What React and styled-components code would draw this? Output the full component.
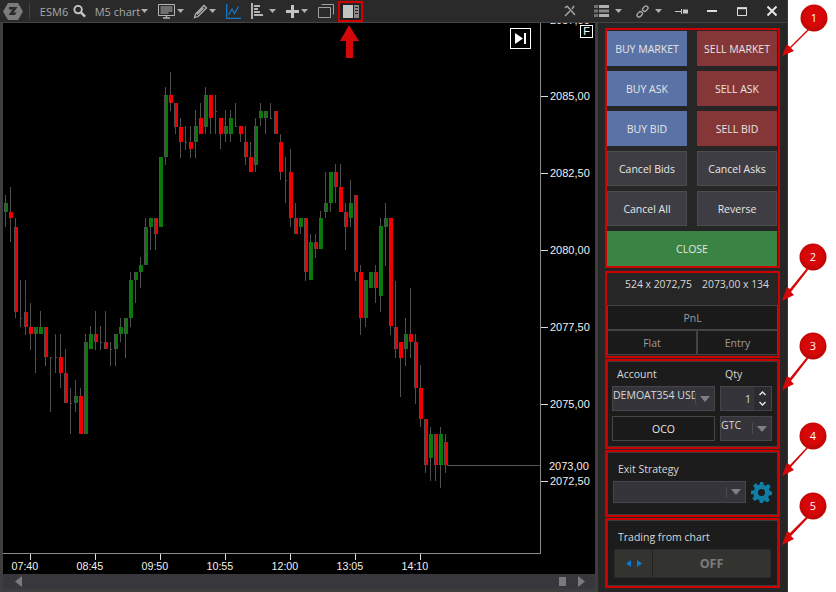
import React from 'react';
import styled, { createGlobalStyle } from 'styled-components';

const GlobalStyle = createGlobalStyle`
  html, body { margin: 0; padding: 0; background: #fff; }
  * { box-sizing: border-box; }
  body { font-family: "Open Sans", "Noto Sans", sans-serif; }
`;

// r = red, g = green, d = doji. [type, bodyTop, bodyBottom, wickTop, wickBottom], in page pixels
const candles = [
  ['g', 203, 212, 195, 227], ['r', 212, 218, 187, 242], ['r', 227, 312, 218, 318], ['d', 318, 318, 280, 327],
  ['r', 312, 327, 280, 335], ['r', 327, 334, 303, 350], ['g', 327, 334, 327, 373], ['g', 327, 334, 311, 334],
  ['r', 327, 357, 327, 366], ['d', 357, 357, 357, 412], ['d', 357, 357, 334, 373], ['r', 357, 373, 334, 388],
  ['r', 373, 403, 349, 403], ['d', 403, 403, 388, 434], ['g', 396, 403, 380, 412], ['r', 396, 434, 388, 434],
  ['g', 342, 434, 334, 434], ['g', 334, 349, 326, 349], ['r', 334, 342, 311, 350], ['d', 342, 342, 326, 350],
  ['r', 342, 349, 311, 349], ['d', 349, 349, 342, 366], ['g', 334, 349, 334, 366], ['g', 327, 334, 318, 342],
  ['g', 318, 334, 318, 358], ['g', 280, 318, 272, 327], ['g', 272, 280, 272, 303], ['g', 265, 272, 257, 288],
  ['g', 227, 265, 218, 265], ['g', 218, 227, 218, 250], ['r', 218, 234, 218, 250], ['g', 157, 227, 157, 227],
  ['g', 95, 157, 87, 165], ['r', 95, 103, 72, 111], ['r', 103, 127, 103, 134], ['r', 127, 142, 118, 158],
  ['d', 142, 142, 126, 150], ['r', 142, 149, 126, 158], ['g', 126, 142, 110, 158], ['r', 118, 134, 103, 134],
  ['g', 95, 127, 87, 134], ['r', 95, 118, 95, 134], ['d', 111, 111, 95, 134], ['r', 118, 134, 118, 149],
  ['g', 126, 134, 110, 142], ['g', 118, 134, 110, 142], ['d', 126, 126, 103, 126], ['r', 126, 134, 126, 142],
  ['r', 142, 157, 126, 165], ['r', 157, 172, 142, 172], ['g', 126, 165, 118, 172], ['g', 111, 118, 103, 126],
  ['g', 111, 118, 111, 134], ['d', 118, 118, 103, 118], ['r', 111, 134, 111, 134], ['r', 142, 172, 134, 180],
  ['d', 180, 180, 157, 203], ['r', 172, 218, 149, 227], ['r', 218, 234, 203, 234], ['g', 218, 227, 218, 234],
  ['r', 218, 272, 218, 281], ['g', 242, 280, 234, 280], ['r', 242, 249, 234, 258], ['g', 218, 249, 211, 249],
  ['g', 203, 212, 172, 218], ['g', 172, 203, 172, 212], ['r', 172, 187, 164, 203], ['r', 187, 212, 164, 212],
  ['r', 212, 227, 203, 250], ['g', 203, 218, 180, 227], ['r', 195, 272, 195, 281], ['r', 272, 318, 265, 335],
  ['g', 280, 318, 280, 327], ['g', 272, 288, 272, 288], ['r', 272, 288, 265, 303], ['g', 226, 296, 218, 312],
  ['g', 218, 227, 203, 266], ['r', 218, 326, 218, 335], ['r', 327, 349, 281, 358], ['r', 342, 358, 342, 397],
  ['g', 334, 349, 318, 366], ['r', 334, 342, 288, 358], ['r', 342, 388, 334, 404], ['r', 388, 419, 365, 427],
  ['r', 419, 465, 419, 473], ['g', 434, 458, 427, 481], ['r', 434, 465, 434, 481], ['g', 434, 465, 427, 488],
  ['r', 442, 465, 434, 473],
];

const prices = [
  ['2087,50', 20], ['2085,00', 96], ['2082,50', 173], ['2080,00', 250],
  ['2077,50', 327], ['2075,00', 404], ['2072,50', 481],
];
const times = ['07:40', '08:45', '09:50', '10:55', '12:00', '13:05', '14:10'];

const Page = styled.div`
  position: relative;
  width: 836px;
  height: 592px;
  overflow: hidden;
`;
const Win = styled.div`
  width: 788px;
  height: 592px;
  background: #262626;
  display: flex;
  flex-direction: column;
  border-right: 1px solid #3a3a3a;
`;
const Toolbar = styled.div`
  height: 23px;
  flex: none;
  display: flex;
  align-items: center;
  background: #2a2a2a;
  border-bottom: 1px solid #444;
  color: #a8a8a8;
  font-size: 11px;
`;
const Tool = styled.div`
  flex: none;
  margin-left: ${p => p.$ml || 0}px;
  width: ${p => p.$w}px;
  height: 20px;
  display: flex;
  align-items: center;
  justify-content: center;
  white-space: nowrap;
`;
const ActiveTool = styled(Tool)`
  height: 21px;
  border: 2px solid #d40000;
  background: #222;
`;
const ToolSep = styled.div`
  flex: none;
  width: 1px;
  height: 16px;
  margin-left: 6px;
  background: #444;
`;
const Spacer = styled.div`
  flex: 1;
`;
const Body = styled.div`
  flex: 1;
  display: flex;
  min-height: 0;
`;
const ChartColumn = styled.div`
  width: 598px;
  flex: none;
  display: flex;
  flex-direction: column;
  background: #3e3e3e;
  padding: 0 3px 3px;
`;
const ChartArea = styled.div`
  position: relative;
  height: 551px;
  background: #000;
  overflow: hidden;
`;
const ChartSvg = styled.svg`
  display: block;
  font-family: "Liberation Sans", Arial, sans-serif;
  font-size: 11px;
`;
const GoEnd = styled.div`
  position: absolute;
  left: 507px;
  top: 5px;
  width: 21px;
  height: 21px;
  border: 1px solid #fff;
  display: flex;
  align-items: center;
  justify-content: center;
`;
const FBadge = styled.div`
  position: absolute;
  left: 577px;
  top: 2px;
  width: 13px;
  height: 13px;
  border: 1px solid #fff;
  color: #fff;
  font: 11px/11px "Liberation Sans", sans-serif;
  text-align: center;
`;
const ScrollBar = styled.div`
  height: 15px;
  flex: none;
  background: #38383c;
  display: flex;
  align-items: center;
  padding: 0 10px 0 12px;
`;
const ScrollThumb = styled.div`
  width: 7px;
  height: 9px;
  background: #7a7a7a;
  margin-left: auto;
  margin-right: 12px;
`;
const Panel = styled.div`
  flex: 1;
  display: flex;
  flex-direction: column;
  gap: 1px;
  padding: 5px 0 0 7px;
  background: #262626;
`;
const Section = styled.section`
  width: 175px;
  height: ${p => p.$h}px;
  flex: none;
  margin-bottom: ${p => p.$mb || 0}px;
  border: 2px solid #d00000;
  display: flex;
  flex-direction: column;
`;
const ButtonGrid = styled.div`
  display: grid;
  grid-template-columns: 80px 80px;
  grid-auto-rows: 35px;
  gap: 5px 10px;
  padding-top: 1px;
`;
const colors = { buy: '#5a73a6', sell: '#853636', neutral: '#3d3d43', close: '#3a8443' };
const OrderButton = styled.div`
  grid-column: ${p => (p.$wide ? '1 / 3' : 'auto')};
  width: ${p => (p.$wide ? '170px' : 'auto')};
  background: ${p => colors[p.$kind]};
  border: ${p => (p.$kind === 'neutral' ? '1px solid #4c4c4c' : 'none')};
  color: #e6e6e6;
  font-size: 10.5px;
  display: flex;
  align-items: center;
  justify-content: center;
`;
const Quotes = styled.div`
  height: 32px;
  display: flex;
  padding: 3px 0 0 18px;
  gap: 10px;
  color: #d8d8d8;
  font-size: 10.4px;
  line-height: 17px;
  white-space: nowrap;
`;
const PnlGrid = styled.div`
  display: grid;
  width: 171px;
  grid-template-columns: 90px 81px;
  grid-template-rows: 25px 25px;
`;
const PnlCell = styled.div`
  grid-column: ${p => (p.$wide ? '1 / 3' : 'auto')};
  background: #1a1a1a;
  border: 1px solid #444;
  color: #9c9c9c;
  font-size: 10.5px;
  display: flex;
  align-items: center;
  justify-content: center;
`;
const Inner = styled.div`
  flex: 1;
  background: #1c1c1c;
  border: 1px solid #3c3c3c;
  padding: ${p => p.$pad};
  color: #d8d8d8;
  font-size: 10.5px;
`;
const AccountGrid = styled.div`
  display: grid;
  grid-template-columns: 103px 52px;
  grid-template-rows: 15px 25px 25px;
  gap: 5px;
`;
const Label = styled.div`
  padding-left: ${p => p.$pl || 0}px;
  line-height: 16px;
  white-space: nowrap;
`;
const Select = styled.div`
  position: relative;
  height: ${p => p.$h || 25}px;
  width: ${p => p.$w || 'auto'};
  background: #34343a;
  border: 1px solid #46464a;
  color: #d8d8d8;
  display: flex;
  align-items: ${p => (p.$top ? 'flex-start' : 'center')};
  overflow: hidden;
  line-height: 16px;
`;
const SelectText = styled.div`
  flex: 1;
  overflow: hidden;
  white-space: nowrap;
`;
const SelectArrow = styled.div`
  flex: none;
  width: ${p => p.$w}px;
  height: 11px;
  align-self: center;
  border-left: 1px solid #4c4c50;
  display: flex;
  align-items: center;
  justify-content: center;
  &::after {
    content: '';
    border-left: 5px solid transparent;
    border-right: 5px solid transparent;
    border-top: 6px solid #808084;
  }
`;
const QtyInput = styled.div`
  display: flex;
  align-items: center;
  justify-content: flex-end;
  background: #34343a;
  border: 1px solid #46464a;
  color: #d8d8d8;
`;
const Spin = styled.div`
  width: 17px;
  height: 100%;
  margin-left: 3px;
  background: #2c2c30;
  display: flex;
  align-items: center;
  justify-content: center;
`;
const OcoButton = styled.div`
  background: #1a1a1a;
  border: 1px solid #46464a;
  color: #e6e6e6;
  display: flex;
  align-items: center;
  justify-content: center;
`;
const StrategyRow = styled.div`
  display: flex;
  align-items: center;
  gap: 5px;
  margin-top: 4px;
`;
const Toggle = styled.div`
  display: flex;
  height: 29px;
  margin-top: 4px;
  background: #333330;
  border: 1px solid #2a2a2a;
`;
const ToggleSide = styled.div`
  width: 38px;
  border-right: 1px solid #222;
  display: flex;
  align-items: center;
  justify-content: center;
`;
const ToggleMain = styled.div`
  flex: 1;
  display: flex;
  align-items: center;
  justify-content: center;
  color: #7c7c7c;
  font-size: 12.5px;
  font-weight: 700;
`;
const Overlay = styled.svg`
  position: absolute;
  left: 0;
  top: 0;
  pointer-events: none;
  font-family: "Open Sans", sans-serif;
`;

const Caret = () => (
  <svg width="7" height="4" viewBox="0 0 7 4"><path d="M0 0h7L3.500 4z" fill="#b0b0b0" /></svg>
);

const Logo = () => (
  <svg width="20" height="19" viewBox="0 0 20 19">
    <path d="M5 1h10l5 8.500-5 8.500H5L0 9.500z" fill="#7c7c7c" />
    <path d="M6 5h8.500l-4 5.500h3L12 13H5.500l4-5.500H6z" fill="#2a2a2a" />
  </svg>
);
const Search = () => (
  <svg width="14" height="14" viewBox="0 0 14 14" fill="none" stroke="#c8c8c8">
    <circle cx="5.500" cy="5.500" r="4" strokeWidth="2" />
    <path d="M8.500 8.500l4.500 4.500" strokeWidth="2.600" />
  </svg>
);
const Monitor = () => (
  <svg width="17" height="15" viewBox="0 0 17 15">
    <path d="M.5.5h16v11H.5z" fill="none" stroke="#b4b4b4" />
    <path d="M2.500 3h12M2.500 5h12M2.500 7h12M2.500 9h8" stroke="#b4b4b4" />
    <path d="M5 14h7M8.500 12v2" stroke="#b4b4b4" strokeWidth="1.400" />
  </svg>
);
const Pencil = () => (
  <svg width="15" height="15" viewBox="0 0 15 15" fill="none" stroke="#b4b4b4">
    <path d="M11 1.500l2.500 2.500-8.500 8.500-3.500 1 1-3.500z" strokeWidth="1.300" />
    <path d="M4 10.500l6.500-6.500" strokeWidth="1.500" />
  </svg>
);
const LineChartIcon = () => (
  <svg width="15" height="15" viewBox="0 0 15 15" fill="none" stroke="#1678c8" strokeWidth="1.300">
    <path d="M.7 0v14.300H15" />
    <path d="M2.500 11L6 5l2.500 4.500L12.500 2.500" />
  </svg>
);
const AlignIcon = () => (
  <svg width="13" height="16" viewBox="0 0 13 16" fill="#b4b4b4">
    <path d="M0 0h2v16H0zM3 2h6v2H3zM3 5h4v2H3zM3 8h6v2H3zM3 11h9v2H3z" />
  </svg>
);
const Plus = () => (
  <svg width="13" height="13" viewBox="0 0 13 13" fill="#c4c4c4"><path d="M5 0h3v5h5v3H8v5H5V8H0V5h5z" /></svg>
);
const Windows = () => (
  <svg width="16" height="14" viewBox="0 0 16 14" fill="none" stroke="#a0a0a0">
    <path d="M3.500.5h12v10" />
    <path d="M.5 3.500h12v10H.5z" />
  </svg>
);
const PanelIcon = () => (
  <svg width="16" height="13" viewBox="0 0 16 13">
    <path d="M0 0h10v13H0z" fill="#c4c4c4" />
    <path d="M11 0h5v13h-5z" fill="#8a8a8a" />
    <path d="M12 2.500h3M12 5.500h3M12 8.500h3" stroke="#222" />
  </svg>
);
const Wrench = () => (
  <svg width="13" height="12" viewBox="0 0 13 12" fill="none" stroke="#a0a0a0" strokeWidth="1.600">
    <path d="M1 11l5-5M3 1l8 9M10 1L8 4" />
    <path d="M1 3l2-2" />
  </svg>
);
const ListIcon = () => (
  <svg width="15" height="12" viewBox="0 0 15 12">
    <path d="M0 0h4v3H0zM0 4.500h4v3H0zM0 9h4v3H0z" fill="#707070" />
    <path d="M5 0h10v3H5zM5 9h10v3H5z" fill="#b0b0b0" />
    <path d="M5 4.500h10v3H5z" fill="#888" />
  </svg>
);
const LinkIcon = () => (
  <svg width="13" height="13" viewBox="0 0 13 13" fill="none" stroke="#a8a8a8" strokeWidth="1.300">
    <rect x="-3" y="-2" width="6" height="4" rx="2" transform="translate(3.700 9.300) rotate(-45)" />
    <rect x="-3" y="-2" width="6" height="4" rx="2" transform="translate(9.300 3.700) rotate(-45)" />
  </svg>
);
const Pin = () => (
  <svg width="13" height="7" viewBox="0 0 13 7" fill="#c8c8c8">
    <path d="M0 3h6v1H0zM6 1h1v5H6zM8 1.500h5v4H8z" />
  </svg>
);
const Minimize = () => (
  <svg width="10" height="2" viewBox="0 0 10 2"><path d="M0 0h10v2H0z" fill="#ddd" /></svg>
);
const Maximize = () => (
  <svg width="10" height="9" viewBox="0 0 10 9" fill="none" stroke="#ddd">
    <path d="M.5 1h9v7.500h-9z" strokeWidth="1" />
    <path d="M0 1.200h10" strokeWidth="2" />
  </svg>
);
const Close = () => (
  <svg width="10" height="10" viewBox="0 0 10 10" stroke="#e6e6e6" strokeWidth="2"><path d="M.5.500l9 9M9.500.500l-9 9" /></svg>
);
const Gear = () => (
  <svg width="21" height="21" viewBox="0 0 24 24" fill="#0f7da6">
    <path fillRule="evenodd" d="M10 0h4l.6 3.400 2.200.9L19.700 2.400l2.800 2.800-2 2.900.9 2.200L24 10.900v3.900l-3.500.6-.9 2.200 2 2.900-2.800 2.800-2.900-2-2.200.9L13.900 24H10l-.6-3.500-2.200-.9-2.900 2-2.800-2.800 2-2.900-.9-2.200L0 13.900V10l3.500-.6.900-2.200-2-2.900 2.800-2.800 2.900 2 2.200-.9zM12 8a4 4 0 1 0 0 8 4 4 0 0 0 0-8z" />
  </svg>
);

const Chart = () => (
  <ChartSvg width="592" height="551" viewBox="3 23 592 551" shapeRendering="crispEdges">
    {candles.map(([type, top, bottom, wickTop, wickBottom], i) => {
      const x = 5 + i * 5;
      return (
        <g key={i}>
          <rect x={x} y={wickTop} width="1" height={wickBottom - wickTop} fill="#505050" />
          {type === 'd' ? (
            <rect x={x} y={top} width="2" height="1" fill="#505050" />
          ) : (
            <>
              <rect x={x - 1} y={top} width="4" height={bottom - top} fill="#505050" />
              <rect x={x} y={top} width="3" height={bottom - top} fill={type === 'r' ? '#f00000' : '#0a780a'} />
            </>
          )}
        </g>
      );
    })}
    <rect x="447" y="465" width="93" height="1" fill="#555" />
    <rect x="540" y="23" width="1" height="531" fill="#8a8a8a" />
    <rect x="3" y="553" width="538" height="1" fill="#8a8a8a" />
    {prices.map(([label, y]) => (
      <g key={label}>
        <rect x="541" y={y} width="7" height="1" fill="#ddd" />
        <text x="550" y={y + 4} fill="#f0f0f0">{label}</text>
      </g>
    ))}
    <text x="549" y="470" fill="#f0f0f0">2073,00</text>
    {times.map((label, i) => (
      <g key={label}>
        <rect x={30 + i * 65} y="554" width="1" height="6" fill="#ddd" />
        <text x={11.5 + i * 65} y="570" fill="#f0f0f0" fontSize="10.700">{label}</text>
      </g>
    ))}
  </ChartSvg>
);

const ScrollArrow = ({ left }) => (
  <svg width="7" height="11" viewBox="0 0 7 11">
    <path d={left ? 'M7 0v11L0 5.500z' : 'M0 0v11l7-5.500z'} fill="#7a7a7a" />
  </svg>
);

const Notes = () => {
  const notes = [
    ['1', 814, 18, 'M809 28L790 47l-3-3-5 12 12-5-3-3 19-19z'],
    ['2', 813, 257, 'M807 268L790 289l-3-2-5 14 12-6-3-3 17-22z'],
    ['3', 813, 346, 'M807 357L790 378l-3-2-5 14 12-6-3-3 17-22z'],
    ['4', 813, 436, 'M807 447L790 465l-3-2-5 13 12-6-3-3 17-19z'],
    ['5', 813, 506, 'M807 516L790 533l-3-2-5 14 12-6-3-3 17-18z'],
  ];
  return (
    <Overlay width="836" height="592" viewBox="0 0 836 592">
      <defs>
        <radialGradient id="noteFill" cx="0.5" cy="0.45" r="0.55">
          <stop offset="0.6" stopColor="#d80808" />
          <stop offset="1" stopColor="#b80404" />
        </radialGradient>
      </defs>
      <path d="M349 25l10 16h-6v17h-7V41h-6z" fill="#d40808" />
      {notes.map(([n, cx, cy, d]) => (
        <g key={n}>
          <path d={d} fill="#d40808" />
          <circle cx={cx} cy={cy} r="13.500" fill="url(#noteFill)" />
          <text x={cx} y={cy + 4} textAnchor="middle" fill="#fff" fontSize="11">{n}</text>
        </g>
      ))}
    </Overlay>
  );
};

export default function App() {
  return (
    <Page>
      <GlobalStyle />
      <Win>
        <Toolbar>
          <Tool $ml={3} $w={20}><Logo /></Tool>
          <ToolSep />
          <Tool $ml={11} $w={26}>ESM6</Tool>
          <Tool $ml={6} $w={13}><Search /></Tool>
          <Tool $ml={10} $w={43}>M5 chart</Tool>
          <Tool $ml={2} $w={7}><Caret /></Tool>
          <Tool $ml={10} $w={17}><Monitor /></Tool>
          <Tool $ml={2} $w={7}><Caret /></Tool>
          <Tool $ml={9} $w={15}><Pencil /></Tool>
          <Tool $ml={1} $w={7}><Caret /></Tool>
          <Tool $ml={10} $w={15}><LineChartIcon /></Tool>
          <Tool $ml={10} $w={13}><AlignIcon /></Tool>
          <Tool $ml={5} $w={7}><Caret /></Tool>
          <Tool $ml={10} $w={13}><Plus /></Tool>
          <Tool $ml={2} $w={7}><Caret /></Tool>
          <Tool $ml={10} $w={16}><Windows /></Tool>
          <ActiveTool $ml={4} $w={25}><PanelIcon /></ActiveTool>
          <Spacer />
          <Tool $w={13}><Wrench /></Tool>
          <Tool $ml={17} $w={15}><ListIcon /></Tool>
          <Tool $ml={6} $w={7}><Caret /></Tool>
          <Tool $ml={14} $w={13}><LinkIcon /></Tool>
          <Tool $ml={6} $w={7}><Caret /></Tool>
          <Tool $ml={13} $w={13}><Pin /></Tool>
          <Tool $ml={19} $w={10}><Minimize /></Tool>
          <Tool $ml={20} $w={10}><Maximize /></Tool>
          <Tool $ml={20} $w={10}><Close /></Tool>
          <Tool $ml={10} $w={0} />
        </Toolbar>
        <Body>
          <ChartColumn>
            <ChartArea>
              <Chart />
              <GoEnd>
                <svg width="11" height="11" viewBox="0 0 11 11" fill="#fff"><path d="M0 0l8 5.500-8 5.500zM9 0h2v11H9z" /></svg>
              </GoEnd>
              <FBadge>F</FBadge>
            </ChartArea>
            <ScrollBar>
              <ScrollArrow left />
              <ScrollThumb />
              <ScrollArrow />
            </ScrollBar>
          </ChartColumn>
          <Panel>
            <Section $h={240} $mb={2}>
              <ButtonGrid>
                <OrderButton $kind="buy">BUY MARKET</OrderButton>
                <OrderButton $kind="sell">SELL MARKET</OrderButton>
                <OrderButton $kind="buy">BUY ASK</OrderButton>
                <OrderButton $kind="sell">SELL ASK</OrderButton>
                <OrderButton $kind="buy">BUY BID</OrderButton>
                <OrderButton $kind="sell">SELL BID</OrderButton>
                <OrderButton $kind="neutral">Cancel Bids</OrderButton>
                <OrderButton $kind="neutral">Cancel Asks</OrderButton>
                <OrderButton $kind="neutral">Cancel All</OrderButton>
                <OrderButton $kind="neutral">Reverse</OrderButton>
                <OrderButton $kind="close" $wide>CLOSE</OrderButton>
              </ButtonGrid>
            </Section>
            <Section $h={87}>
              <Quotes>
                <span>524 x 2072,75</span>
                <span>2073,00 x 134</span>
              </Quotes>
              <PnlGrid>
                <PnlCell $wide>PnL</PnlCell>
                <PnlCell>Flat</PnlCell>
                <PnlCell>Entry</PnlCell>
              </PnlGrid>
            </Section>
            <Section $h={90}>
              <Inner $pad="4px 4px 0">
                <AccountGrid>
                  <Label $pl={5}>Account</Label>
                  <Label $pl={5}>Qty</Label>
                  <Select $top>
                    <SelectText>DEMOAT354 USD</SelectText>
                    <SelectArrow $w={19} />
                  </Select>
                  <QtyInput>
                    1
                    <Spin>
                      <svg width="9" height="17" viewBox="0 0 9 17" fill="none" stroke="#e8e8e8" strokeWidth="1.400">
                        <path d="M1.500 5l3-3 3 3M1.500 12l3 3 3-3" />
                      </svg>
                    </Spin>
                  </QtyInput>
                  <OcoButton>OCO</OcoButton>
                  <Select $top>
                    <SelectText>GTC</SelectText>
                    <SelectArrow $w={19} />
                  </Select>
                </AccountGrid>
              </Inner>
            </Section>
            <Section $h={67}>
              <Inner $pad="8px 5px 0">
                <Label $pl={5}>Exit Strategy</Label>
                <StrategyRow>
                  <Select $h={22} $w="133px">
                    <SelectText />
                    <SelectArrow $w={19} />
                  </Select>
                  <Gear />
                </StrategyRow>
              </Inner>
            </Section>
            <Section $h={70}>
              <Inner $pad="8px 6px 0">
                <Label $pl={4}>Trading from chart</Label>
                <Toggle>
                  <ToggleSide>
                    <svg width="16" height="7" viewBox="0 0 16 7" fill="#0f78d0"><path d="M5 0v7L0 3.500zM11 0v7l5-3.500z" /></svg>
                  </ToggleSide>
                  <ToggleMain>OFF</ToggleMain>
                </Toggle>
              </Inner>
            </Section>
          </Panel>
        </Body>
      </Win>
      <Notes />
    </Page>
  );
}
